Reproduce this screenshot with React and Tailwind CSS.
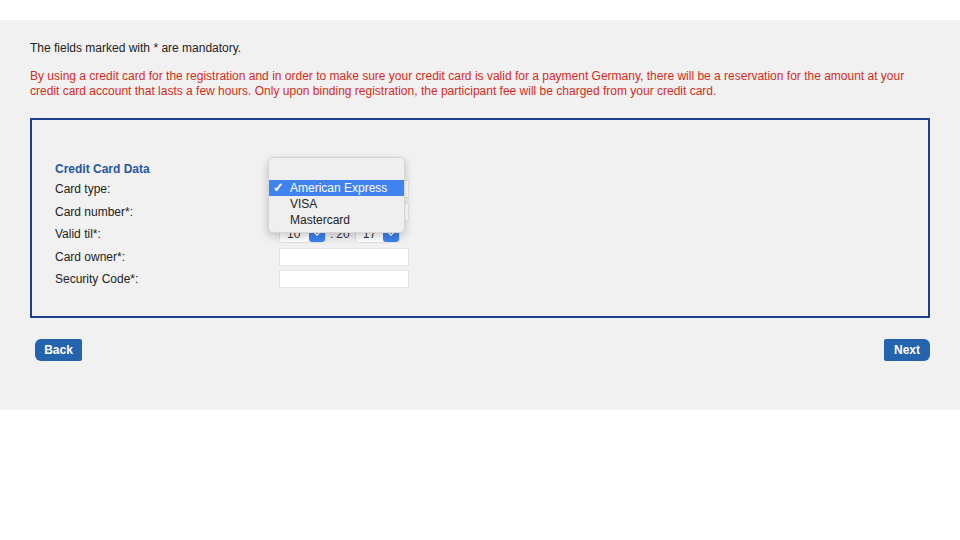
import { ChevronDown } from "lucide-react"

function Arrow() {
  return (
    <span className="absolute right-0 top-0 bottom-0 w-[16px] bg-[#3b82f0] rounded-[3px] flex items-center justify-center">
      <ChevronDown className="w-[10px] h-[10px] text-white" strokeWidth={3} />
    </span>
  )
}

function MiniSelect({ value, width }) {
  return (
    <div className={`relative h-[17px] ${width} bg-white border border-[#e2e2e2] rounded-[3px] text-[12px] leading-[15px] pl-[7px] text-[#333]`}>
      {value}
      <Arrow />
    </div>
  )
}

function TextInput() {
  return <div className="w-[130px] h-[18px] bg-white border border-[#e4e4e4]" />
}

export default function App() {
  const rows = [
    { label: "Card type:", control: <div className="w-[130px] h-[18px] bg-white border border-[#e4e4e4]" /> },
    { label: "Card number*:", control: <TextInput /> },
    {
      label: "Valid til*:",
      control: (
        <div className="flex items-center text-[12px] text-[#333]">
          <MiniSelect value="10" width="w-[47px]" />
          <span className="ml-[4px] mr-[3px]">:</span>
          <span className="mr-[5px]">20</span>
          <MiniSelect value="17" width="w-[45px]" />
        </div>
      ),
    },
    { label: "Card owner*:", control: <TextInput /> },
    { label: "Security Code*:", control: <TextInput /> },
  ]

  return (
    <div className="w-[960px] h-[540px] bg-white font-['Liberation_Sans',Arial,sans-serif] text-[12px] text-[#222]">
      <div className="h-[20px]" />
      <div className="bg-[#f1f1f1] px-[30px] pt-[21px] h-[390px]">
        <p className="leading-[15px]">The fields marked with * are mandatory.</p>
        <p className="mt-[13px] text-[#d52b22] leading-[15px]">
          By using a credit card for the registration and in order to make sure your credit card is valid for a payment Germany, there will be a reservation for the amount at your credit card account that lasts a few hours. Only upon binding registration, the participant fee will be charged from your credit card.
        </p>

        <div className="mt-[19px] w-[900px] border-2 border-[#1d3f8c] pl-[23px] pt-[40px] pb-[25px]">
          <div className="h-[18px] leading-[18px] font-bold text-[#2458a3]">Credit Card Data</div>
          <div className="relative">
            {rows.map((r) => (
              <div key={r.label} className="flex items-center h-[22.5px]">
                <span className="w-[224px]">{r.label}</span>
                {r.control}
              </div>
            ))}

            {/* open select popup */}
            <div className="absolute left-[213px] top-[-21px] w-[137px] bg-[#efefef] rounded-[5px] border border-[#d6d6d6] shadow-[0_3px_8px_rgba(0,0,0,0.22)] pt-[6px] pb-[4px] text-[12px] text-[#222]">
              <div className="h-[16px]" />
              <div className="h-[16px] bg-[#3f83f0] text-white flex items-center">
                <span className="w-[21px] pl-[4px] text-[13px] font-bold">✓</span>
                American Express
              </div>
              <div className="h-[16px] flex items-center pl-[21px]">VISA</div>
              <div className="h-[16px] flex items-center pl-[21px]">Mastercard</div>
            </div>
          </div>
        </div>

        <div className="mt-[21px] flex justify-between pl-[5px] w-[900px]">
          <button className="h-[22px] w-[47px] bg-[#2463ae] text-white font-bold text-[12px] rounded-l-[6px] rounded-r-[2px]">
            Back
          </button>
          <button className="h-[22px] w-[46px] bg-[#2463ae] text-white font-bold text-[12px] rounded-r-[6px] rounded-l-[2px]">
            Next
          </button>
        </div>
      </div>
    </div>
  )
}
